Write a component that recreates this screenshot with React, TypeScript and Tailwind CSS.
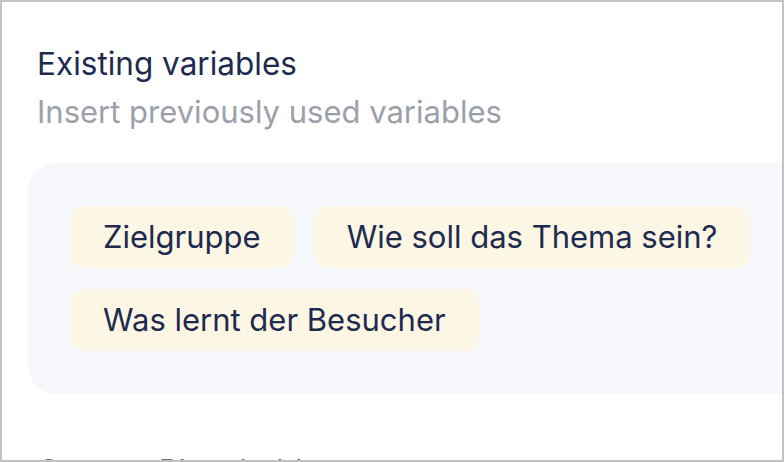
import React from 'react';

export default function App() {
  const variables = ['Zielgruppe', 'Wie soll das Thema sein?', 'Was lernt der Besucher'];

  return (
    <div className="h-[462px] w-[784px] overflow-hidden border-2 border-[#c2c2c2] bg-white font-['Inter',sans-serif]">
      <div className="pl-[35px] pt-[38px]">
        <h2 className="text-[31.5px] leading-[48px] text-[#1e2b4f]">Existing variables</h2>
        <p className="text-[31px] leading-[48px] text-[#9ca0ab]">Insert previously used variables</p>

        {/* Variables panel */}
        <div className="ml-[-9px] mr-[-60px] mt-[27px] rounded-[28px] bg-[#f7f8fc] pb-[43px] pl-[42px] pr-[40px] pt-[43px]">
          <div className="flex w-[700px] flex-wrap gap-x-[20px] gap-y-[21px]">
            {variables.map((v) => (
              <button
                key={v}
                className="flex h-[62px] items-center rounded-[14px] bg-[#fcf6e4] px-[33px] text-[31px] text-[#1e2b4f]"
              >
                {v}
              </button>
            ))}
          </div>
        </div>

        <h3 className="mt-[53px] text-[31px] leading-[48px] text-[#6b6f7a]">Custom Placeholder</h3>
      </div>
    </div>
  );
}
